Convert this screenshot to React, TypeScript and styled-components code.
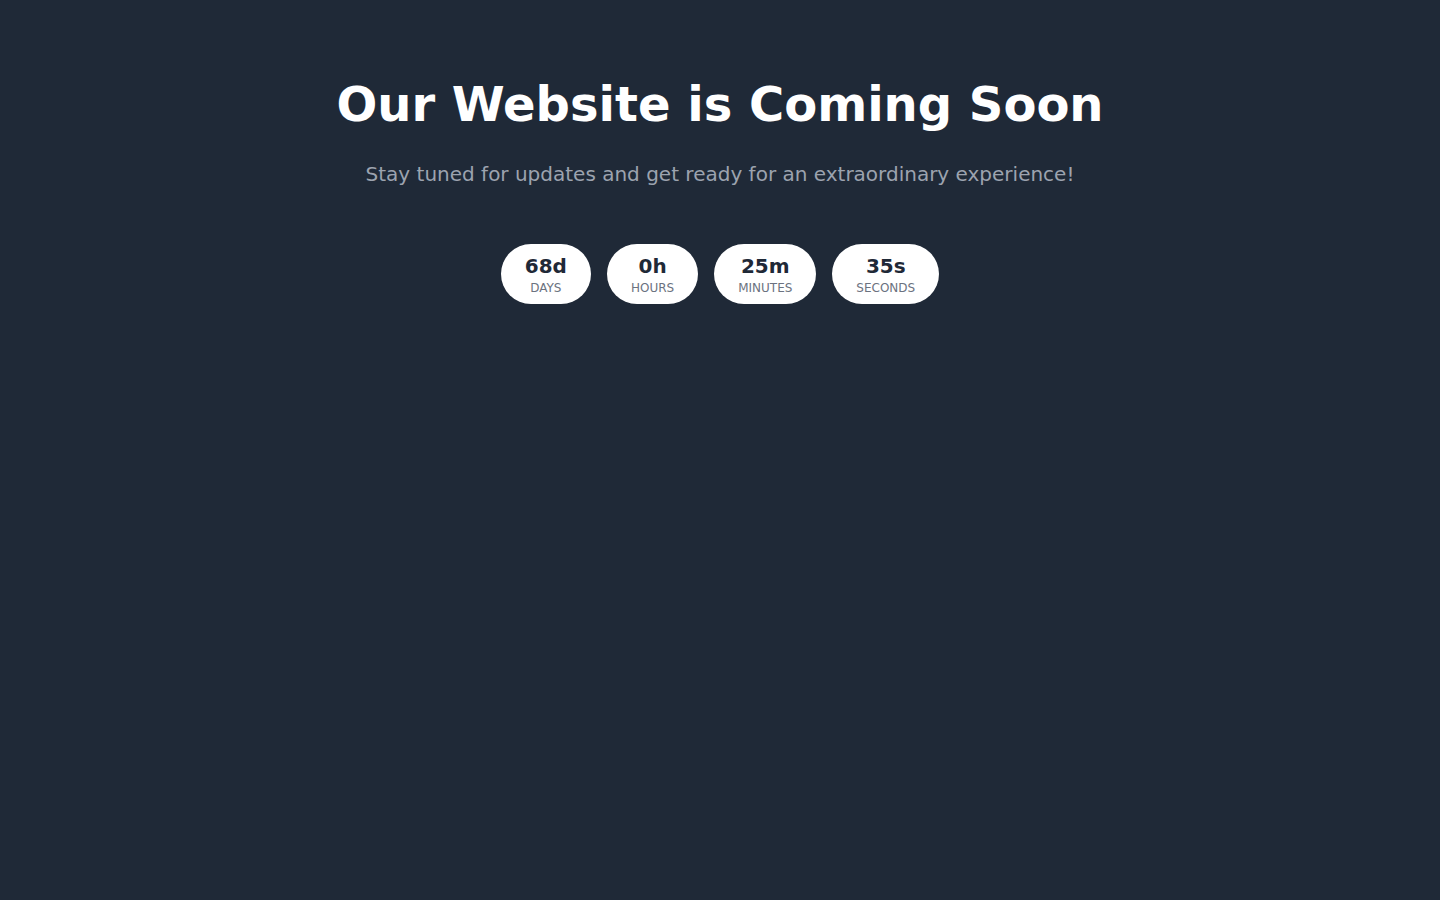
import React from "react";
import styled, { createGlobalStyle } from "styled-components";

const Global = createGlobalStyle`
  html, body { margin: 0; padding: 0; background: #1f2937; }
  body { font-family: "DejaVu Sans", "Liberation Sans", sans-serif; }
`;

const Page = styled.main`
  min-height: 100vh;
  box-sizing: border-box;
  background: #1f2937;
  display: flex;
  flex-direction: column;
  align-items: center;
  padding-top: 80px;
`;

const Title = styled.h1`
  margin: 0;
  font-size: 48px;
  line-height: 48px;
  font-weight: 700;
  color: #ffffff;
`;

const Subtitle = styled.p`
  margin: 32px 0 0;
  font-size: 20px;
  line-height: 28px;
  color: #9ca3af;
`;

const Countdown = styled.div`
  margin-top: 56px;
  display: flex;
  gap: 16px;
`;

const Pill = styled.div`
  background: #ffffff;
  border-radius: 9999px;
  padding: 8px 24px;
  display: flex;
  flex-direction: column;
  align-items: center;
`;

const Value = styled.span`
  font-size: 20px;
  line-height: 28px;
  font-weight: 700;
  color: #1f2937;
`;

const Label = styled.span`
  font-size: 12px;
  line-height: 16px;
  color: #6b7280;
  text-transform: uppercase;
`;

const units = [
  { value: "68d", label: "Days" },
  { value: "0h", label: "Hours" },
  { value: "25m", label: "Minutes" },
  { value: "35s", label: "Seconds" },
];

export default function App() {
  return (
    <>
      <Global />
      <Page>
        <Title>Our Website is Coming Soon</Title>
        <Subtitle>Stay tuned for updates and get ready for an extraordinary experience!</Subtitle>
        <Countdown>
          {units.map((u) => (
            <Pill key={u.label}>
              <Value>{u.value}</Value>
              <Label>{u.label}</Label>
            </Pill>
          ))}
        </Countdown>
      </Page>
    </>
  );
}
